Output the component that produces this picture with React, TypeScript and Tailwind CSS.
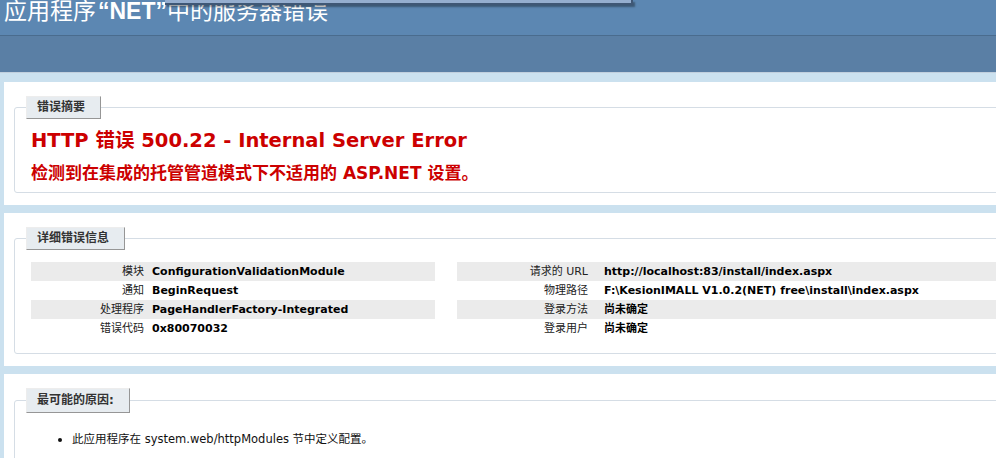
const verdana = "font-['DejaVu_Sans','Noto_Sans_CJK_SC',sans-serif]";

type Row = { label: string; value: string };

const leftRows: Row[] = [
  { label: "模块", value: "ConfigurationValidationModule" },
  { label: "通知", value: "BeginRequest" },
  { label: "处理程序", value: "PageHandlerFactory-Integrated" },
  { label: "错误代码", value: "0x80070032" }
];

const rightRows: Row[] = [
  { label: "请求的 URL", value: "http://localhost:83/install/index.aspx" },
  { label: "物理路径", value: "F:\\KesionIMALL V1.0.2(NET) free\\install\\index.aspx" },
  { label: "登录方法", value: "尚未确定" },
  { label: "登录用户", value: "尚未确定" }
];

function Legend({ children, tall }: { children: React.ReactNode; tall?: boolean }) {
  return (
    <legend
      className={`-ml-[5px] border-t border-l border-t-[#ededed] border-l-[#ededed] border-r border-b border-r-[#969696] border-b-[#969696] bg-[#e7ecf0] pl-[10px] pr-[15px] text-[12px] font-bold text-[#333333] ${tall ? "py-[5px]" : "py-[4px]"} leading-[13px]`}
    >
      {children}
    </legend>
  );
}

function DetailTable({ rows, width, labelWidth }: { rows: Row[]; width: string; labelWidth: string }) {
  return (
    <div className={`${width} shrink-0`}>
      {rows.map((row, i) => (
        <div
          key={row.label}
          className={`flex h-[19px] items-center text-[11px] leading-[13px] ${i % 2 === 0 ? "bg-[#ebebeb]" : ""}`}
        >
          <div className={`${labelWidth} shrink-0 text-right font-normal text-[#222]`}>
            {row.label}
          </div>
          <div className="whitespace-nowrap font-bold text-black">{row.value}</div>
        </div>
      ))}
    </div>
  );
}

export default function App() {
  return (
    <div className={`relative h-[458px] w-[996px] overflow-hidden bg-[#cbe1ef] ${verdana}`}>
      <div className="h-[35px] overflow-hidden bg-[#5c87b2] pl-[4px]">
        <h1 className="-mt-[5px] whitespace-nowrap font-['Noto_Sans_CJK_SC',sans-serif] text-[23px] leading-[28px] font-normal text-white">
          应用程序
          <span className="ml-[2px] font-['Liberation_Sans',sans-serif] font-bold">“NET”</span>
          中的服务器错误
        </h1>
      </div>
      <div className="h-[38px] border-t border-t-[#4a6c8e] border-b border-b-[#c1cfdd] bg-[#5a7fa5]" />
      <div className="absolute top-0 left-[165px] h-[5px] w-[468px] border-r-2 border-b-2 border-r-[#3f5775] border-b-[#3f5775] bg-[#95aecf] shadow-[2px_2px_2px_rgba(0,0,0,0.35)]" />

      <div className="w-[1300px] pt-[9px] pl-[4px]">
        <div className="bg-white pt-[14px] pr-[10px] pb-[12px] pl-[10px]">
          <fieldset className="rounded-[3px] border border-[#d5dde5] px-[16px] pb-[8px]">
            <Legend>错误摘要</Legend>
            <h3 className="mt-[11px] text-[19.5px] leading-[22px] font-bold text-[#cc0000]">
              HTTP 错误 500.22 - Internal Server Error
            </h3>
            <h4 className="mt-[10px] text-[17px] leading-[22px] font-bold text-[#cc0000]">
              检测到在集成的托管管道模式下不适用的 ASP.NET 设置。
            </h4>
          </fieldset>
        </div>

        <div className="mt-[8px] bg-white pt-[14px] pr-[10px] pb-[12px] pl-[10px]">
          <fieldset className="rounded-[3px] border border-[#d5dde5] px-[16px] pb-[15px]">
            <Legend>详细错误信息</Legend>
            <div className="mt-[12px] flex gap-[22px]">
              <DetailTable rows={leftRows} width="w-[404px]" labelWidth="w-[121px] pr-[8px]" />
              <DetailTable rows={rightRows} width="w-[735px]" labelWidth="w-[147px] pr-[16px]" />
            </div>
          </fieldset>
        </div>

        <div className="mt-[8px] bg-white pt-[14px] pr-[10px] pb-[12px] pl-[10px]">
          <fieldset className="rounded-[3px] border border-[#d5dde5] px-[16px] pb-[15px]">
            <Legend tall>最可能的原因:</Legend>
            <ul className="mt-[19px] ml-[41px] list-disc text-[11.5px] leading-[14px] text-[#111]">
              <li>此应用程序在 system.web/httpModules 节中定义配置。</li>
            </ul>
          </fieldset>
        </div>
      </div>
    </div>
  );
}
